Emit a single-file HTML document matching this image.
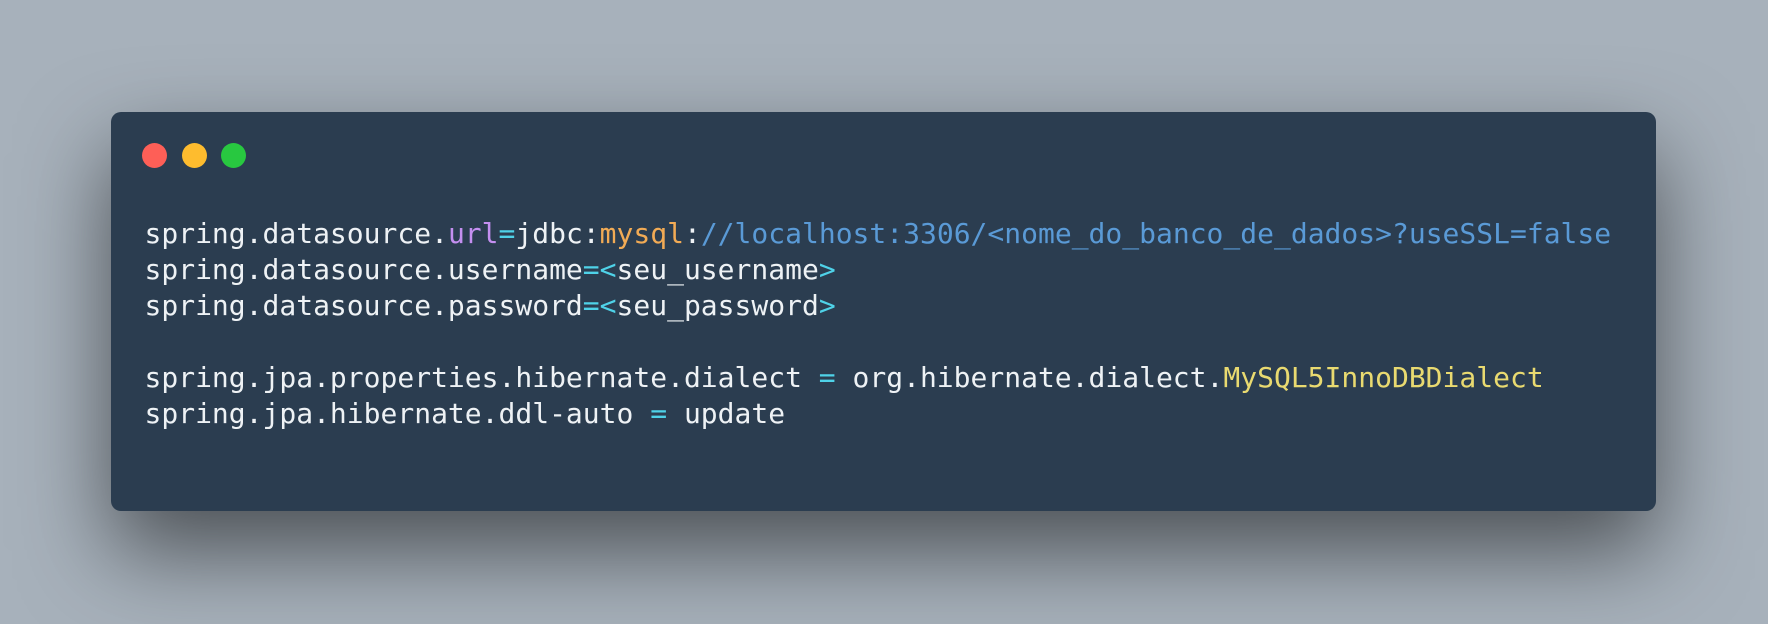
<!DOCTYPE html>
<html><head><style>
html,body{margin:0;padding:0}
body{width:1768px;height:624px;background:#a7b1bb;position:relative;overflow:hidden}
.win{position:absolute;left:111px;top:112px;width:1545px;height:399px;background:#2b3d50;border-radius:10px;box-shadow:0 40px 90px rgba(0,0,0,0.55)}
.dot{position:absolute;top:143px;width:25px;height:25px;border-radius:50%}
pre{position:absolute;left:144.5px;top:216px;margin:0;font-family:"DejaVu Sans Mono","Liberation Mono",monospace;font-size:28px;line-height:36px;color:#eef2f5}
.p{color:#c48ff0}.o{color:#f2ab55}.c{color:#4fd2e8}.b{color:#5a9ad6}.y{color:#e9da70}
</style></head><body>
<div class="win"></div>
<div class="dot" style="left:142px;background:#fe5f57"></div>
<div class="dot" style="left:181.5px;background:#febc2e"></div>
<div class="dot" style="left:221px;background:#28c840"></div>
<pre>spring.datasource.<span class="p">url</span><span class="c">=</span>jdbc:<span class="o">mysql</span>:<span class="b">//localhost:3306/&lt;nome_do_banco_de_dados&gt;?useSSL=false</span>
spring.datasource.username<span class="c">=&lt;</span>seu_username<span class="c">&gt;</span>
spring.datasource.password<span class="c">=&lt;</span>seu_password<span class="c">&gt;</span>

spring.jpa.properties.hibernate.dialect <span class="c">=</span> org.hibernate.dialect.<span class="y">MySQL5InnoDBDialect</span>
spring.jpa.hibernate.ddl-auto <span class="c">=</span> update</pre>
</body></html>
